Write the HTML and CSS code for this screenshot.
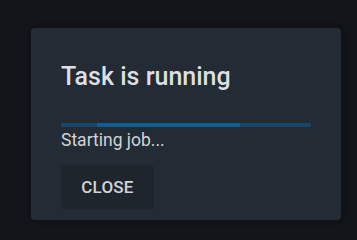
FILE: index.html
```html
<!DOCTYPE html>
<html>
<head>
<meta charset="utf-8">
<link rel="stylesheet" href="styles.css">
</head>
<body>
<div class="dialog">
  <h2 class="title">Task is running</h2>
  <div class="progress"><div class="bar" style="left:36px;width:143px"></div></div>
  <div class="status">Starting job...</div>
  <div class="actions"><button class="btn">CLOSE</button></div>
</div>
</body>
</html>
```
FILE: styles.css
```css
html, body { margin: 0; height: 100%; }
body {
  background: #12161b;
  font-family: Roboto, "Noto Sans", sans-serif;
  padding: 28px 0 0 31px;
  box-sizing: border-box;
}
.dialog {
  width: 310px;
  height: 192px;
  box-sizing: border-box;
  background: #232b34;
  border-radius: 4px;
  padding: 34px 30px 11px 30px;
  box-shadow: 0 0 10px rgba(0,0,0,0.45);
  display: flex;
  flex-direction: column;
}
.title {
  margin: 0;
  font-size: 25px;
  line-height: 30px;
  font-weight: 500;
  color: #dcdfe3;
}
.progress {
  position: relative;
  margin-top: 31px;
  height: 4px;
  flex: none;
  background: #1b4565;
  overflow: hidden;
}
.bar {
  position: absolute;
  top: 0;
  bottom: 0;
  background: #0f5f93;
}
.status {
  margin-top: 3px;
  font-size: 17.5px;
  line-height: 20px;
  color: #d0d4d8;
}
.actions { margin-top: 15px; display: flex; }
.btn {
  width: 93px;
  height: 44px;
  border: none;
  border-radius: 4px;
  background: #1f252c;
  color: #d0d4d8;
  font-family: Roboto, "Noto Sans", sans-serif;
  font-size: 17px;
  font-weight: 500;
  letter-spacing: 0.2px;
  padding: 0;
}
```
